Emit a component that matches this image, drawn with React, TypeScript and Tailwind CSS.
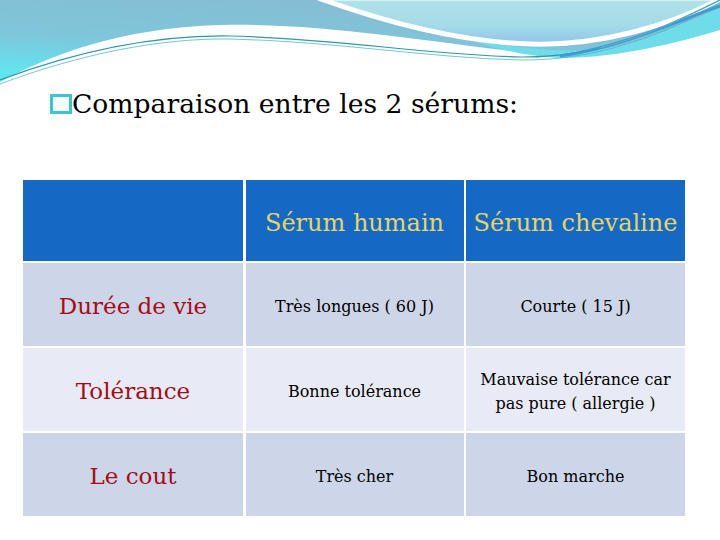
const rows = [
  { label: "Durée de vie", a: "Très longues ( 60 J)", b: "Courte ( 15 J)", bg: "bg-[#cdd5e8]" },
  { label: "Tolérance", a: "Bonne tolérance", b: "Mauvaise tolérance car pas pure ( allergie )", bg: "bg-[#e8ebf5]" },
  { label: "Le cout", a: "Très cher", b: "Bon marche", bg: "bg-[#cdd5e8]" },
];

function Wave() {
  return (
    <svg className="block" width="720" height="90" viewBox="0 0 720 90">
      <defs>
        <linearGradient id="main" x1="0.6" y1="0" x2="0.1" y2="1">
          <stop offset="0" stopColor="#86bcd3" />
          <stop offset="0.55" stopColor="#7fc6da" />
          <stop offset="1" stopColor="#5ce9f1" />
        </linearGradient>
        <linearGradient id="bubble" x1="0" y1="0" x2="0" y2="1">
          <stop offset="0" stopColor="#b2e3e8" />
          <stop offset="0.6" stopColor="#a4dbe8" />
          <stop offset="1" stopColor="#8fc4ea" />
        </linearGradient>
      </defs>
      {/* fond bleu */}
      <path d="M0 0 H720 V10 C 680 28, 620 52, 560 56 C 450 46, 330 22, 220 25 C 120 28, 50 55, 0 82 Z" fill="url(#main)" />
      {/* bande cyan sous la bulle */}
      <path d="M470 40 C 540 52, 600 56, 640 40 C 680 26, 705 14, 720 8 V30 C 680 42, 620 58, 560 58 C 530 57, 500 50, 470 40 Z" fill="#6fdce9" />
      {/* bulle claire */}
      <path d="M318 -2 C 390 24, 460 42, 530 44 C 600 46, 670 26, 722 -2 Z" fill="url(#bubble)" stroke="#ffffff" strokeWidth="5" />
      {/* traits fins */}
      <path d="M0 80 C 80 50, 160 35, 230 36 C 330 38, 430 55, 520 57 C 600 58, 660 30, 720 0" fill="none" stroke="#2f97a8" strokeWidth="1.2" />
      <path d="M0 84 C 80 54, 160 38, 230 39 C 330 41, 430 58, 520 60 C 600 61, 665 33, 720 4" fill="none" stroke="#4fb7c4" strokeWidth="0.8" />
      <path d="M560 56 C 620 48, 680 20, 720 6" fill="none" stroke="#3d9cd0" strokeWidth="3" />
      <path d="M600 48 C 650 35, 690 15, 720 0" fill="none" stroke="#5ab2d8" strokeWidth="1" />
    </svg>
  );
}

export default function App() {
  return (
    <div className="w-[720px] h-[540px] bg-white overflow-hidden font-['DejaVu_Serif',serif]">
      <Wave />

      {/* TITRE */}
      <div className="flex items-center pl-[50px] -mt-[1px] h-[30px]">
        <span className="w-[22px] h-[20px] border-[3px] border-[#3fc3cc] bg-[#f4fbfc]" />
        <h1 className="text-[26.6px] leading-none text-black">Comparaison entre les 2 sérums:</h1>
      </div>

      {/* TABLEAU */}
      <div className="ml-[23px] mt-[61px] w-[662px] grid grid-cols-[220px_218px_219px] grid-rows-[81px_83px_83px_83px] gap-x-[2.5px] gap-y-[2px]">
        <div className="bg-[#1569c4]" />
        <div className="bg-[#1569c4] flex items-center justify-center pt-1 text-[24px] text-[#e6d467]">Sérum humain</div>
        <div className="bg-[#1569c4] flex items-center justify-center pt-1 text-[24px] text-[#e6d467]">Sérum chevaline</div>
        {rows.map((r) => (
          <>
            <div key={r.label} className={`${r.bg} flex items-center justify-center pt-1 text-[23px] text-[#a30d17]`}>{r.label}</div>
            <div className={`${r.bg} flex items-center justify-center pt-1 text-[16px] text-black`}>{r.a}</div>
            <div className={`${r.bg} flex items-center justify-center pt-1 text-center text-[16px] leading-[24px] text-black px-2`}>{r.b}</div>
          </>
        ))}
      </div>
    </div>
  );
}
